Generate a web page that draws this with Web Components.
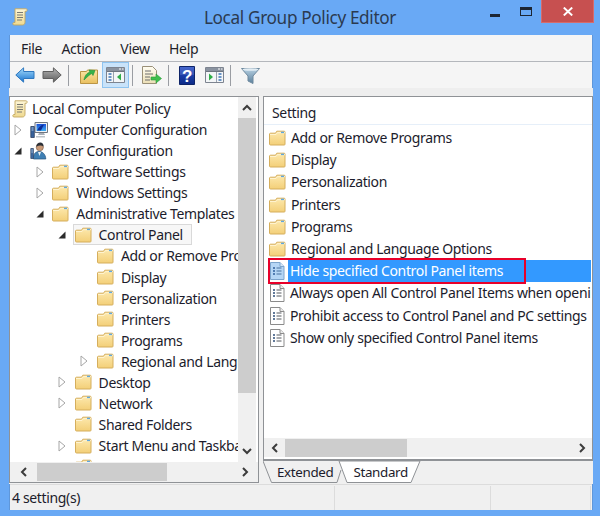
<!DOCTYPE html>
<html lang="en">
<head>
<meta charset="utf-8">
<title>Local Group Policy Editor</title>
<style>
html,body{margin:0;padding:0}
body{width:600px;height:516px;overflow:hidden;background:#69a9f5;font-family:"Noto Sans","Open Sans",sans-serif;color:#1c1c24;letter-spacing:-.35px}
</style>
</head>
<body>
<gp-window>
  <gp-titlebar slot="title">Local Group Policy Editor</gp-titlebar>
  <gp-menubar slot="menu"><span>File</span><span>Action</span><span>View</span><span>Help</span></gp-menubar>
  <gp-toolbar slot="tools">
    <gp-tool icon="back"></gp-tool><gp-tool icon="forward"></gp-tool><gp-sep></gp-sep>
    <gp-tool icon="up"></gp-tool><gp-tool icon="tree" active></gp-tool><gp-sep></gp-sep>
    <gp-tool icon="export" style="width:26px"></gp-tool><gp-sep></gp-sep>
    <gp-tool icon="help" style="width:26px;margin:0 1px 0 -1px"></gp-tool><gp-tool icon="pane" style="width:26px"></gp-tool><gp-sep></gp-sep>
    <gp-tool icon="filter" style="width:26px"></gp-tool>
  </gp-toolbar>
  <gp-tree slot="left">
    <gp-row level="0" icon="scroll">Local Computer Policy</gp-row>
    <gp-row level="1" exp="closed" icon="computer">Computer Configuration</gp-row>
    <gp-row level="1" exp="open" icon="user">User Configuration</gp-row>
    <gp-row level="2" exp="closed" icon="folder">Software Settings</gp-row>
    <gp-row level="2" exp="closed" icon="folder">Windows Settings</gp-row>
    <gp-row level="2" exp="open" icon="folder">Administrative Templates</gp-row>
    <gp-row level="3" exp="open" icon="folder" current>Control Panel</gp-row>
    <gp-row level="4" icon="folder">Add or Remove Programs</gp-row>
    <gp-row level="4" icon="folder">Display</gp-row>
    <gp-row level="4" icon="folder">Personalization</gp-row>
    <gp-row level="4" icon="folder">Printers</gp-row>
    <gp-row level="4" icon="folder">Programs</gp-row>
    <gp-row level="4" exp="closed" icon="folder">Regional and Language Options</gp-row>
    <gp-row level="3" exp="closed" icon="folder">Desktop</gp-row>
    <gp-row level="3" exp="closed" icon="folder">Network</gp-row>
    <gp-row level="3" icon="folder">Shared Folders</gp-row>
    <gp-row level="3" exp="closed" icon="folder">Start Menu and Taskbar</gp-row>
    <gp-row level="3" icon="folder"></gp-row>
  </gp-tree>
  <gp-list slot="right">
    <gp-item icon="folder">Add or Remove Programs</gp-item>
    <gp-item icon="folder">Display</gp-item>
    <gp-item icon="folder">Personalization</gp-item>
    <gp-item icon="folder">Printers</gp-item>
    <gp-item icon="folder">Programs</gp-item>
    <gp-item icon="folder">Regional and Language Options</gp-item>
    <gp-item icon="policy" selected>Hide specified Control Panel items</gp-item>
    <gp-item icon="policy">Always open All Control Panel Items when opening Control Panel</gp-item>
    <gp-item icon="policy">Prohibit access to Control Panel and PC settings</gp-item>
    <gp-item icon="policy">Show only specified Control Panel items</gp-item>
  </gp-list>
  <gp-statusbar slot="status">4 setting(s)</gp-statusbar>
</gp-window>
<script>
const grad=(id,a,b)=>`<linearGradient id="${id}" x1="0" y1="0" x2="0" y2="1"><stop offset="0" stop-color="${a}"/><stop offset="1" stop-color="${b}"/></linearGradient>`;
const ICONS={
 back:[20,16,`<defs>${grad('a','#a8defc','#1672cf')}</defs><path d="M.8 8 8.600.8v3.700H19v7H8.600v3.700z" fill="url(#a)" stroke="#2f78bf"/>`],
 forward:[20,16,`<defs>${grad('a','#b5b5b5','#5e5e5e')}</defs><path d="M19.200 8 11.400.8v3.700H1v7h10.400v3.700z" fill="url(#a)" stroke="#5f5f5f"/>`],
 up:[18,17,`<defs>${grad('a','#fbe6a8','#e9bf5e')}</defs><path d="M.5 4.500h6l1-1.500h10v13.500H.5z" fill="url(#a)" stroke="#bb9545"/><path d="M4 13C5 8 7 6 10 5.200L9 3l6 .5-2 5-1.300-2C10 7.500 7.500 9.500 4 13z" fill="#35b34a" stroke="#1f8f38" stroke-width=".6"/>`],
 tree:[19,16,`<path d="M.5.5h18v15H.5z" fill="#f4f6f8" stroke="#7d8490"/><path d="M1 1h17v3H1z" fill="#8a93a0"/><path d="M13 2h2M16 2h1.500" stroke="#fff"/><path d="M1 4.500h17" stroke="#6d7580"/><path d="M7.500 5v10" stroke="#9aa2ad"/><path d="M2.500 7h3M2.500 10h3M2.500 13h3" stroke="#3c76b5" stroke-width="1.400"/><path d="M11 10l4-3.500v7z" fill="#2fae48"/>`],
 export:[20,18,`<defs>${grad('a','#fffdf2','#ecdfb6')}</defs><path d="M.5.5h10l4 4v13H.5z" fill="url(#a)" stroke="#9a9078"/><path d="M3 5h6M3 8h8M3 11h5M3 14h5" stroke="#6d6d6d"/><path d="M9 11h5V8l5.500 4.500L14 17v-3H9z" fill="#3fbf4d" stroke="#2b9a3a" stroke-width=".6"/>`],
 help:[16,19,`<defs>${grad('a','#2c52c8','#0c2a86')}</defs><path d="M.5.5h15v18H.5z" fill="url(#a)" stroke="#0e2468"/><path d="M1 1h14v8H1z" fill="#fff" opacity=".12"/><text x="8" y="15.500" text-anchor="middle" font-family="Liberation Sans" font-weight="700" font-size="17" fill="#fff">?</text>`],
 pane:[19,16,`<path d="M.5.5h18v15H.5z" fill="#f4f6f8" stroke="#7d8490"/><path d="M1 1h17v3H1z" fill="#8a93a0"/><path d="M13 2h2M16 2h1.500" stroke="#fff"/><path d="M1 4.500h17" stroke="#6d7580"/><path d="M11.500 5v10" stroke="#9aa2ad"/><path d="M13.500 7h3M13.500 10h3M13.500 13h3" stroke="#3c76b5" stroke-width="1.400"/><path d="M8 10 4 6.500v7z" fill="#2fae48"/>`],
 filter:[19,17,`<defs>${grad('a','#b7d1e3','#5b7f9b')}</defs><path d="M.5 1.500h18l-6.500 7.500v7.500l-5-2.500V9z" fill="url(#a)" stroke="#6f8a9f"/><ellipse cx="9.500" cy="2.500" rx="8" ry="1.300" fill="#e2edf4"/>`],
 scroll:[16,18,`<defs>${grad('a','#fdf6d8','#efd98f')}</defs><path d="M3 .8h11c1.200 0 1.600 1.500.5 2.500H13v11c0 1.500-1 2.700-2.500 2.700H2c-1.300 0-1.700-1.700-.4-2.500H3z" fill="url(#a)" stroke="#c3a760" stroke-width=".9"/><path d="M5 4.500h6M5 7h6M5 9.500h6M5 12h5" stroke="#7a7a72"/>`],
 computer:[18,17,`<defs>${grad('a','#1a4fd8','#3fb0f2')}</defs><path d="M5 1.500h12.500v10H5z" fill="#eef1f5" stroke="#6f7680"/><path d="M6.500 3h9.500v7H6.500z" fill="url(#a)"/><path d="M7 9.500c2-4 4-5.500 7-6l-3 6z" fill="#0c2c98"/><path d="M9 12h5l1 2H8z" fill="#aab0b8"/><path d="M.8 5.500h3.500v11H.8z" fill="#37629c" stroke="#2d3f5e" stroke-width=".8"/><path d="M1.500 7h2M1.500 9h2" stroke="#cfe0f4" stroke-width=".8"/><path d="M6 15h9v1.500H6z" fill="#bcc2c9"/>`],
 user:[18,18,`<path d="M3.500 17c-.5-5 2-7.500 5.500-7.500s6.500 2.500 6.800 7.500z" fill="#3e7fb4" stroke="#26537c" stroke-width=".7"/><path d="M8 10l1.500 4 1.500-4z" fill="#e6eef4"/><circle cx="9.800" cy="5.200" r="3.600" fill="#c89a78" stroke="#7a5842" stroke-width=".6"/><path d="M6.300 4.800c.2-3 2-4.200 4-4.200s3.200 1.200 3.200 3.800c-2-1.300-4.500-1.300-7.200.4z" fill="#2c3138"/><path d="M.8 6.500h2.600v10H.8z" fill="#3e6da6" stroke="#2d3f5e" stroke-width=".7"/><path d="M1.400 8h1.400M1.400 10h1.400" stroke="#d5e3f3" stroke-width=".8"/>`],
 folder:[17,16,`<defs>${grad('a','#fde9ae','#f3cf78')}</defs><path d="M1.500 3.200h5l1.300-2h7.400c.5 0 .8.300.8.800v12.300c0 .5-.3.700-.8.700H1.500c-.5 0-1-.3-1-.8V4c0-.5.500-.8 1-.8z" fill="url(#a)" stroke="#d5ae5d"/><path d="M1 4.500h6l1.300-1.800H16" fill="none" stroke="#fff3cf"/><path d="M12 1.700h3v1.400h-3z" fill="#5fa7df"/>`],
 policy:[16,18,`<path d="M1.500.5h9.500l4 4v13H1.500z" fill="#fff" stroke="#8b8b8b"/><path d="M11 .5v4h4" fill="#ececec" stroke="#8b8b8b"/><path d="M4 6h2M4 9h2M4 12h2" stroke="#2f4f7a" stroke-width="1.600"/><path d="M7.500 6h5M7.500 9h5M7.500 12h5" stroke="#55585e"/>`],
 policysel:[16,18,`<path d="M1.500.5h9.500l4 4v13H1.500z" fill="#b5d6f5" stroke="#7ca4cc"/><path d="M11 .5v4h4" fill="#d4e6f8" stroke="#7ca4cc"/><path d="M4 6h2M4 9h2M4 12h2" stroke="#2f5f9a" stroke-width="1.600"/><path d="M7.500 6h5M7.500 9h5M7.500 12h5" stroke="#47709e"/>`]
};
function def(name,css,html){
  customElements.define(name,class extends HTMLElement{
    connectedCallback(){
      if(this.shadowRoot)return;
      const r=this.attachShadow({mode:'open'});
      r.innerHTML=`<style>${css}</style>${typeof html==='function'?html(this):html}`;
    }
  });
}
def('gp-icon',':host{display:block;flex:none;line-height:0}svg{display:block}',
  el=>{const i=ICONS[el.getAttribute('name')];return `<svg width="${i[0]}" height="${i[1]}" viewBox="0 0 ${i[0]} ${i[1]}" aria-hidden="true">${i[2]}</svg>`});
def('gp-window',`
  :host{display:flex;flex-direction:column;width:600px;height:516px;box-sizing:border-box}
  .client{flex:1;display:flex;flex-direction:column;margin:0 7px 6px 9px;background:#f0f0f0;min-height:0;box-shadow:0 0 0 1px #5f97da inset}
  .strip{height:8px;background:#eee;flex:none;border-bottom:1px solid #9a9ea4}
  .panes{flex:1;display:flex;min-height:0;gap:4px;padding-bottom:1px;background:#f0f0f0;margin:-1px 0 0}
`,`<slot name="title"></slot><div class="client"><slot name="menu"></slot><slot name="tools"></slot><div class="strip"></div><div class="panes"><slot name="left"></slot><slot name="right"></slot></div><slot name="status"></slot></div>`);
def('gp-titlebar',`
  :host{display:flex;align-items:flex-start;height:35px;flex:none;color:#2b3a50;font-size:17.200px;letter-spacing:-.35px}
  .i{width:110px;flex:none}
  gp-icon{margin:8px 0 0 12px}
  .t{flex:1;text-align:center;line-height:35px}
  .b{display:flex;width:110px;flex:none;align-items:flex-start}
  .min{width:30px;height:24px}
  .min i{display:block;width:10px;height:3px;background:#1d2633;margin-top:14px}
  .max{width:21px;height:24px}
  .max i{display:block;box-sizing:border-box;width:12px;height:9px;margin:7px 0 0 0;border:1.500px solid #1d2633;border-top-width:3px}
  .close{width:53px;height:23px;background:#c75050;border:1px solid #d66b6b;border-top:0;box-sizing:border-box;display:flex;align-items:center;justify-content:center}
`,`<div class="i"><gp-icon name="scroll"></gp-icon></div><div class="t"><slot></slot></div><div class="b"><div class="min"><i></i></div><div class="max"><i></i></div><div class="close"><svg width="10" height="9" viewBox="0 0 10 9"><path d="M.8.600 9.200 8.400M9.200.600.800 8.400" stroke="#fff" stroke-width="2"/></svg></div></div>`);
def('gp-menubar',`
  :host{display:flex;height:26px;flex:none;align-items:center;background:#f5f5f5;border-bottom:1px solid #b4b7bc;padding-left:11px;gap:19.500px;font-size:14px;color:#1f1f2b;box-sizing:content-box;margin:0 1px}
  ::slotted(span){display:block}
`,`<slot></slot>`);
def('gp-toolbar',`
  :host{display:flex;height:26px;flex:none;align-items:center;background:#f5f5f5;padding-left:1px;margin:0 1px}
`,`<slot></slot>`);
def('gp-tool',`
  :host{display:flex;align-items:center;justify-content:center;width:27px;height:26px;box-sizing:border-box;flex:none}
  :host([active]){background:#c9e3fa;border:1px solid #8fc4f0}
`,el=>`<gp-icon name="${el.getAttribute('icon')}"></gp-icon>`);
def('gp-sep',`:host{display:block;width:1px;height:21px;background:#9a9da3;margin:0 6px 0 3px;flex:none}`,'');
const chev=d=>({u:'M1 6 5 2l4 4',d:'M1 2l4 4 4-4',l:'M6 1 2 5l4 4',r:'M2 1l4 4-4 4'})[d];
const chevSvg=d=>`<svg width="${d=='u'||d=='d'?10:8}" height="${d=='u'||d=='d'?8:10}" viewBox="0 0 ${d=='u'||d=='d'?'10 8':'8 10'}"><path d="${chev(d)}" fill="none" stroke="#3c3c3c" stroke-width="2"/></svg>`;
def('gp-hscroll',`
  :host{display:flex;align-items:center;height:19px;background:#f0f0f0;flex:none}
  .a{width:var(--arrow,26px);display:flex;justify-content:center;flex:none}
  .thumb{width:var(--thumb,130px);height:18px;background:#cdcdcd;flex:none}
  .sp{flex:1}
`,`<div class="a">${chevSvg('l')}</div><div class="thumb"></div><div class="sp"></div><div class="a">${chevSvg('r')}</div>`);
def('gp-vscroll',`
  :host{display:flex;flex-direction:column;align-items:stretch;width:18px;background:#f0f0f0;flex:none}
  .a{height:21px;display:flex;align-items:center;justify-content:center;flex:none}
  .thumb{height:275px;background:#cdcdcd;flex:none}
  .sp{flex:1}
`,`<div class="a">${chevSvg('u')}</div><div class="thumb"></div><div class="sp"></div><div class="a" style="height:22px">${chevSvg('d')}</div>`);
def('gp-tree',`
  :host{display:flex;flex-direction:column;width:250px;flex:none;box-sizing:border-box;border:1px solid #8f9296;background:#f0f0f0;overflow:hidden}
  .top{flex:1;display:flex;min-height:0}
  .body{flex:1;min-width:0;overflow:hidden;padding-top:1px;background:#fff}
  gp-hscroll{--arrow:27px;--thumb:130px;margin-bottom:1px}
  .gap{width:2px;background:#fff}
`,`<div class="top"><div class="body"><slot></slot></div><gp-vscroll></gp-vscroll><div class="gap"></div></div><gp-hscroll></gp-hscroll>`);
def('gp-row',`
  :host{display:flex;align-items:center;height:21.070px;white-space:nowrap;font-size:14px;color:#1c1c2c}
  .exp{width:12px;flex:none;display:flex;justify-content:center}
  .w{display:flex;align-items:center;height:21px;box-sizing:border-box;border:1px solid transparent;margin-left:4.500px;padding:0 8px 0 1px;gap:7px}
  :host([current]) .w{background:#f7f7f7;border-color:#d9d9d9}
`,el=>{
  const l=+el.getAttribute('level'),e=el.getAttribute('exp');
  const x=e=='open'?`<svg width="10" height="10" viewBox="0 0 10 10"><path d="M8.500 1.500v7h-7z" fill="#2b2b2b"/></svg>`:e=='closed'?`<svg width="8" height="12" viewBox="0 0 8 12"><path d="M1 1l6 5-6 5z" fill="#fff" stroke="#a6a6a6"/></svg>`:'';
  const pad=l==0?0:1.5+22.3*(l-1);
  const ws=l==0?'style="gap:4px;margin-left:0"':l==1?'style="gap:6px"':'';
  return `<style>:host{padding-left:${pad}px}</style>${l==0?'':`<div class="exp">${x}</div>`}<div class="w" ${ws}><gp-icon name="${el.getAttribute('icon')}"></gp-icon><span><slot></slot></span></div>`;
});
def('gp-list',`
  :host{flex:1;min-width:0;display:flex;flex-direction:column;background:#f0f0f0;overflow:hidden}
  .box{flex:1;min-height:0;display:flex;flex-direction:column;border:1px solid #8f9296;border-bottom-width:2px;background:#fff}
  .head{height:28px;flex:none;display:flex;align-items:center;padding:3px 0 0 8px;font-size:14px;border-bottom:1px solid #e6eff9;box-sizing:border-box;color:#1c1c2c}
  .rows{flex:1;min-height:0;padding-top:2px;overflow:hidden}
  .tabs{height:22px;flex:none;display:flex;align-items:center;position:relative;font-size:13.400px;color:#1c1c2c;background:#f0f0f0}
  .tabs svg{position:absolute;left:0;top:0}
  .tabs span{position:relative}
  .e{margin-left:14px}.s{margin-left:20px}
  gp-hscroll{--arrow:21px;--thumb:122px;margin:0 0 2px}
`,`<div class="box"><div class="head">Setting</div><div class="rows"><slot></slot></div><gp-hscroll></gp-hscroll></div>
<div class="tabs"><svg width="170" height="22" viewBox="0 0 170 22"><path d="M0 0 8.500 21.500H74L78 9" fill="#f0f0f0" stroke="#8f9296"/><path d="M76 0 84 21.500H148L157 0z" fill="#fff" stroke="#8f9296"/></svg><span class="e">Extended</span><span class="s">Standard</span></div>`);
def('gp-item',`
  :host{display:flex;align-items:center;height:22.200px;white-space:nowrap;font-size:14px;color:#1c1c2c;padding-left:5px;position:relative;gap:3px}
  .l{flex:1;min-width:0;overflow:hidden;height:22px;line-height:22px;padding-left:2px;margin-right:1px}
  :host([selected]) .l{background:#3399ff;color:#fff}
  .mark{position:absolute;left:4px;top:-2px;width:258px;height:26px;box-sizing:border-box;border:2px solid #e8002a;pointer-events:none}
`,el=>`<gp-icon name="${el.hasAttribute('selected')?'policysel':el.getAttribute('icon')}"></gp-icon><div class="l"><slot></slot></div>${el.hasAttribute('selected')?'<div class="mark"></div>':''}`);
def('gp-statusbar',`
  :host{display:flex;height:26px;flex:none;align-items:center;background:#f0f0f0;border-top:1px solid #dcdcdc;font-size:14px;color:#1c1c2c;box-sizing:border-box;margin:0 1px}
  .c{height:24px;display:flex;align-items:center;border-right:1px solid #dcdcdc;box-sizing:border-box}
`,`<div class="c" style="width:325px;padding-left:2px"><slot></slot></div><div class="c" style="width:156px"></div><div class="c" style="width:100px"></div>`);
</script>
</body>
</html>
